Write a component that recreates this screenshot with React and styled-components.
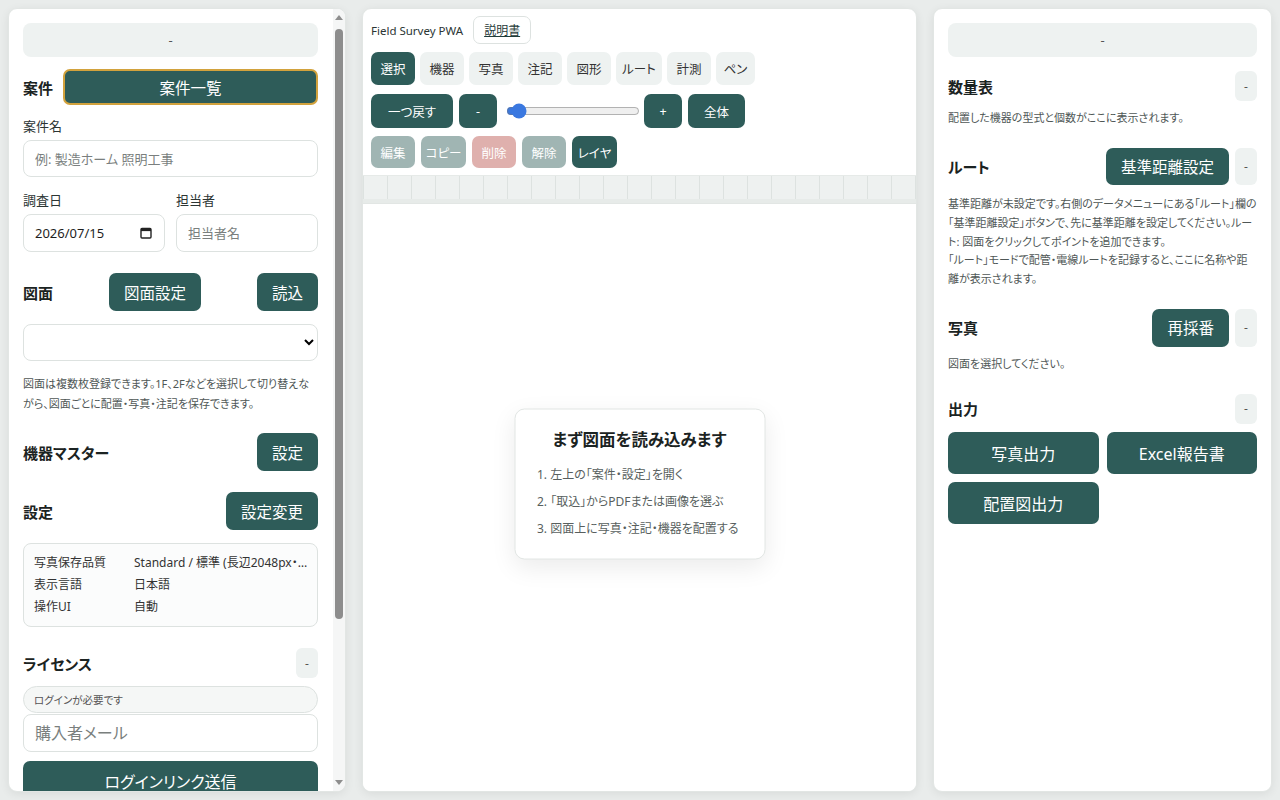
import styled, { createGlobalStyle } from 'styled-components';

const teal = '#2e5c59';
const soft = '#eef2f1';
const line = '#dde2e0';

const GlobalStyle = createGlobalStyle`
	* { box-sizing: border-box; }
	html, body { margin: 0; height: 100%; }
	body {
		background: #e9eceb;
		color: #1e2a29;
		font-family: 'Noto Sans', 'Noto Sans CJK JP', sans-serif;
		font-feature-settings: 'palt';
	}
	#root { height: 100%; }
	button, input, select { font-feature-settings: 'palt'; }
`;

const Layout = styled.div`
	display: grid;
	grid-template-columns: 338px 1fr 339px;
	column-gap: 16px;
	padding: 8px;
	height: 100vh;
`;

const Panel = styled.aside`
	background: #fff;
	border: 1px solid #e2e6e4;
	border-radius: 9px;
	box-shadow: 0 2px 10px rgba(0, 0, 0, 0.07);
	padding: 14px;
	overflow: hidden;
	min-height: 0;
`;

const ScrollPanel = styled.aside`
	display: flex;
	background: #fff;
	border: 1px solid #e2e6e4;
	border-radius: 9px;
	box-shadow: 0 2px 10px rgba(0, 0, 0, 0.07);
	overflow: hidden;
	min-height: 0;
`;

const ScrollArea = styled.div`
	flex: 1;
	min-width: 0;
	padding: 14px 15px 14px 14px;
	overflow-y: auto;
	scrollbar-width: none;
	&::-webkit-scrollbar { display: none; }
`;

const Track = styled.div`
	flex: none;
	width: 12px;
	display: flex;
	flex-direction: column;
	align-items: center;
	background: #f5f6f6;
	padding: 4px 0 4px;
`;

const Arrow = styled.span`
	flex: none;
	width: 0;
	height: 0;
	border-left: 4px solid transparent;
	border-right: 4px solid transparent;
	${({ $down }) =>
		$down ? 'border-top: 5px solid #8e8e8e;' : 'border-bottom: 5px solid #8e8e8e;'}
	margin-top: ${({ $down }) => ($down ? 'auto' : '2px')};
	margin-bottom: ${({ $down }) => ($down ? '2px' : '0')};
`;

const Thumb = styled.span`
	flex: none;
	width: 8px;
	height: 590px;
	margin-top: 9px;
	border-radius: 4px;
	background: #8d8d8d;
`;

const CollapseBar = styled.button`
	display: block;
	width: 100%;
	height: 34px;
	border: none;
	border-radius: 8px;
	background: ${soft};
	color: #555;
	font: inherit;
	font-size: 13px;
`;

const Heading = styled.h2`
	margin: 0;
	font-size: 15px;
	font-weight: 700;
	color: #1b2322;
	white-space: nowrap;
	align-self: center;
`;

const Row = styled.div`
	display: flex;
	align-items: ${({ $stretch }) => ($stretch ? 'stretch' : 'center')};
	justify-content: ${({ $justify }) => $justify || 'flex-start'};
	gap: ${({ $gap }) => $gap || 0}px;
	margin-top: ${({ $mt }) => $mt || 0}px;
`;

const Spacer = styled.div`
	flex: 1;
`;

const Button = styled.button`
	flex: ${({ $grow }) => ($grow ? 1 : 'none')};
	height: ${({ $h }) => $h || 38}px;
	padding: 0 ${({ $px }) => ($px === undefined ? 15 : $px)}px;
	border: ${({ $gold }) => ($gold ? '2px solid #d2a23d' : 'none')};
	border-radius: 7px;
	background: ${teal};
	color: #fff;
	font: inherit;
	font-size: ${({ $fs }) => $fs || 15.5}px;
	white-space: nowrap;
	cursor: pointer;
`;

const MiniButton = styled.button`
	flex: none;
	width: 22px;
	min-height: 30px;
	border: none;
	border-radius: 6px;
	background: ${soft};
	color: #555;
	font: inherit;
	font-size: 12px;
	padding: 0;
`;

const Label = styled.label`
	display: block;
	font-size: 13px;
	line-height: 18px;
	color: #2c3534;
	margin-top: ${({ $mt }) => $mt || 0}px;
`;

const TextInput = styled.input`
	display: block;
	width: 100%;
	height: ${({ $h }) => $h || 37}px;
	margin-top: ${({ $mt }) => ($mt === undefined ? 5 : $mt)}px;
	border: 1px solid ${line};
	border-radius: 8px;
	padding: 0 11px;
	font: inherit;
	font-size: ${({ $fs }) => $fs || 13}px;
	color: #222;
	background: #fff;
	&::placeholder { color: #7a7f7e; }
`;

const DateField = styled.div`
	display: flex;
	align-items: center;
	justify-content: space-between;
	height: 38px;
	margin-top: 5px;
	border: 1px solid ${line};
	border-radius: 8px;
	padding: 0 12px 0 11px;
	font-size: 13px;
	color: #1e1e1e;
`;

const TwoCol = styled.div`
	display: grid;
	grid-template-columns: 142px 1fr;
	column-gap: 11px;
	margin-top: 14px;
`;

const Select = styled.select`
	display: block;
	width: 100%;
	height: 37px;
	margin-top: 13px;
	border: 1px solid ${line};
	border-radius: 8px;
	background: #fff;
	font: inherit;
	font-size: 13px;
	padding: 0 8px;
`;

const Help = styled.p`
	margin: ${({ $mt }) => $mt || 0}px 0 0;
	font-size: 11px;
	line-height: ${({ $lh }) => $lh || 20}px;
	color: #4f5756;
`;

const InfoBox = styled.div`
	margin-top: 13px;
	border: 1px solid ${line};
	border-radius: 8px;
	background: #fbfcfc;
	padding: 8px 7px 8px 10px;
	display: grid;
	grid-template-columns: 100px 1fr;
	font-size: 12px;
	line-height: 22px;
	color: #333;
	span { white-space: nowrap; overflow: hidden; text-overflow: ellipsis; }
`;

const Pill = styled.div`
	margin-top: 8px;
	height: 27px;
	border: 1px solid ${line};
	border-radius: 14px;
	background: #f5f7f6;
	padding: 0 10px;
	display: flex;
	align-items: center;
	font-size: 10.5px;
	color: #555;
`;

const Center = styled.main`
	background: #fff;
	border: 1px solid #e2e6e4;
	border-radius: 9px;
	box-shadow: 0 2px 10px rgba(0, 0, 0, 0.07);
	display: flex;
	flex-direction: column;
	overflow: hidden;
	min-width: 0;
`;

const Toolbar = styled.div`
	padding: 7px 8px 7px;
	display: flex;
	flex-direction: column;
	gap: 8px;
	border-bottom: 1px solid #e6eae8;
`;

const TopRow = styled.div`
	display: flex;
	align-items: center;
	gap: 10px;
	height: 28px;
	font-size: 11.5px;
	color: #2b3534;
`;

const Manual = styled.button`
	height: 28px;
	padding: 0 10px;
	border: 1px solid ${line};
	border-radius: 7px;
	background: #fff;
	font: inherit;
	font-size: 12px;
	color: #1f3b39;
	text-decoration: underline;
`;

const ToolRow = styled.div`
	display: flex;
	align-items: center;
	gap: ${({ $gap }) => $gap || 6}px;
	margin-top: ${({ $mt }) => $mt || 0}px;
`;

const Tool = styled.button`
	flex: none;
	height: ${({ $h }) => $h || 33}px;
	min-width: ${({ $w }) => $w || 38}px;
	width: ${({ $w }) => ($w ? `${$w}px` : 'auto')};
	padding: 0 ${({ $px }) => ($px === undefined ? 9 : $px)}px;
	border: none;
	border-radius: 7px;
	font: inherit;
	font-size: 12.5px;
	white-space: nowrap;
	color: ${({ $variant }) => ($variant === 'plain' ? '#333' : '#fff')};
	background: ${({ $variant }) =>
		$variant === 'plain' ? soft : $variant === 'danger' ? '#b9524b' : teal};
	opacity: ${({ $disabled }) => ($disabled ? 0.45 : 1)};
`;

const Zoom = styled.input`
	width: 134px;
	margin: 0 -2px 0 3px;
	accent-color: #3a78e0;
`;

const Canvas = styled.div`
	position: relative;
	flex: 1;
	background: #fff;
`;

const Ruler = styled.div`
	height: 28px;
	background-color: #eef1f0;
	background-image: linear-gradient(to right, #dde2e0 1px, transparent 1px);
	background-size: 24px 100%;
	border-bottom: 1px solid #e2e6e4;
	box-shadow: inset 0 -4px 0 #e7ebe9;
`;

const EmptyCard = styled.div`
	position: absolute;
	left: 50%;
	top: 50%;
	transform: translate(-50%, -50%);
	width: 251px;
	padding: 18px 22px 17px;
	background: #fff;
	border: 1px solid #e2e6e4;
	border-radius: 10px;
	box-shadow: 0 8px 24px rgba(0, 0, 0, 0.08);
	h3 {
		margin: 0 0 9px;
		text-align: center;
		font-size: 16.5px;
		line-height: 24px;
		font-weight: 700;
		color: #1b2322;
	}
	ol {
		margin: 0;
		padding: 0;
		list-style: none;
		font-size: 12px;
		line-height: 27px;
		color: #585f5e;
		white-space: nowrap;
	}
`;

const OutputGrid = styled.div`
	display: grid;
	grid-template-columns: 1fr 1fr;
	gap: 8px;
	margin-top: 8px;
`;

const CalendarIcon = () => (
	<svg width="12" height="12" viewBox="0 0 12 12" aria-hidden="true">
		<rect x="1" y="1.5" width="10" height="9.5" rx="1" fill="none" stroke="#222" strokeWidth="1.4" />
		<rect x="1" y="1.5" width="10" height="2.6" fill="#222" />
	</svg>
);

export default function App() {
	const tools = [
		{ label: '選択', w: 44 },
		{ label: '機器', w: 44 },
		{ label: '写真', w: 44 },
		{ label: '注記', w: 44 },
		{ label: '図形', w: 44 },
		{ label: 'ルート', w: 46 },
		{ label: '計測', w: 44 },
		{ label: 'ペン', w: 39 },
	];

	return (
		<>
			<GlobalStyle />
			<Layout>
				<ScrollPanel>
					<ScrollArea>
						<CollapseBar>-</CollapseBar>
						<Row $mt={12} $gap={10}>
							<Heading>案件</Heading>
							<Button $grow $gold $h={36}>案件一覧</Button>
						</Row>
						<Label $mt={12}>案件名</Label>
						<TextInput placeholder='例: 製造ホーム 照明工事' />
						<TwoCol>
							<div>
								<Label>調査日</Label>
								<DateField>
									<span>2026/07/15</span>
									<CalendarIcon />
								</DateField>
							</div>
							<div>
								<Label>担当者</Label>
								<TextInput $h={38} placeholder='担当者名' />
							</div>
						</TwoCol>
						<Row $mt={21} $justify='space-between'>
							<Heading>図面</Heading>
							<Button>図面設定</Button>
							<Button>読込</Button>
						</Row>
						<Select>
							<option></option>
						</Select>
						<Help $mt={13}>
							図面は複数枚登録できます。1F、2Fなどを選択して切り替えながら、図面ごとに配置・写真・注記を保存できます。
						</Help>
						<Row $mt={19} $justify='space-between'>
							<Heading>機器マスター</Heading>
							<Button>設定</Button>
						</Row>
						<Row $mt={21} $justify='space-between'>
							<Heading>設定</Heading>
							<Button>設定変更</Button>
						</Row>
						<InfoBox>
							<span>写真保存品質</span>
							<span>Standard / 標準 (長辺2048px・JPEG 85%)</span>
							<span>表示言語</span>
							<span>日本語</span>
							<span>操作UI</span>
							<span>自動</span>
						</InfoBox>
						<Row $mt={21} $justify='space-between'>
							<Heading>ライセンス</Heading>
							<MiniButton>-</MiniButton>
						</Row>
						<Pill>ログインが必要です</Pill>
						<TextInput $mt={1} $h={38} $fs={16} placeholder='購入者メール' />
						<Row $mt={9}>
							<Button $grow $h={40} $fs={16}>ログインリンク送信</Button>
						</Row>
						<Help $mt={12}>
							購入時のメールアドレスを入力すると、ログイン用のリンクが送信されます。
						</Help>
						<Row $mt={21} $justify='space-between'>
							<Heading>データ</Heading>
							<MiniButton>-</MiniButton>
						</Row>
						<Help $mt={8}>バックアップと復元はこの端末内で行われます。</Help>
						<Row $mt={12} $gap={8}>
							<Button $grow>バックアップ</Button>
							<Button $grow>復元</Button>
						</Row>
						<Help $mt={16}>Field Survey PWA</Help>
					</ScrollArea>
					<Track>
						<Arrow />
						<Thumb />
						<Arrow $down />
					</Track>
				</ScrollPanel>

				<Center>
					<Toolbar>
						<TopRow>
							<span>Field Survey PWA</span>
							<Manual>説明書</Manual>
						</TopRow>
						<ToolRow $gap={5}>
							{tools.map((t, i) => (
								<Tool key={t.label} $w={t.w} $px={0} $variant={i === 0 ? 'teal' : 'plain'}>
									{t.label}
								</Tool>
							))}
						</ToolRow>
						<ToolRow $mt={1}>
							<Tool $h={34} $px={17}>一つ戻す</Tool>
							<Tool $h={34}>-</Tool>
							<Zoom type='range' min='0' max='100' defaultValue='4' />
							<Tool $h={34}>+</Tool>
							<Tool $h={34} $px={16}>全体</Tool>
						</ToolRow>
						<ToolRow>
							<Tool $h={32} $w={44} $px={0} $disabled>編集</Tool>
							<Tool $h={32} $w={45} $px={0} $disabled>コピー</Tool>
							<Tool $h={32} $w={44} $px={0} $disabled $variant='danger'>削除</Tool>
							<Tool $h={32} $w={44} $px={0} $disabled>解除</Tool>
							<Tool $h={32} $w={45} $px={0}>レイヤ</Tool>
						</ToolRow>
					</Toolbar>
					<Canvas>
						<Ruler />
						<EmptyCard>
							<h3>まず図面を読み込みます</h3>
							<ol>
								<li>1. 左上の「案件・設定」を開く</li>
								<li>2. 「取込」からPDFまたは画像を選ぶ</li>
								<li>3. 図面上に写真・注記・機器を配置する</li>
							</ol>
						</EmptyCard>
					</Canvas>
				</Center>

				<Panel>
					<CollapseBar>-</CollapseBar>
					<Row $mt={14} $stretch>
						<Heading>数量表</Heading>
						<Spacer />
						<MiniButton>-</MiniButton>
					</Row>
					<Help $mt={7} $lh={19}>配置した機器の型式と個数がここに表示されます。</Help>
					<Row $mt={21} $stretch $gap={6}>
						<Heading>ルート</Heading>
						<Spacer />
						<Button $h={37}>基準距離設定</Button>
						<MiniButton>-</MiniButton>
					</Row>
					<Help $mt={10} $lh={18.8}>
						基準距離が未設定です。右側のデータメニューにある「ルート」欄の「基準距離設定」ボタンで、先に基準距離を設定してください。ルート: 図面をクリックしてポイントを追加できます。
						<br />
						「ルート」モードで配管・電線ルートを記録すると、ここに名称や距離が表示されます。
					</Help>
					<Row $mt={20} $stretch $gap={6}>
						<Heading>写真</Heading>
						<Spacer />
						<Button $h={38}>再採番</Button>
						<MiniButton>-</MiniButton>
					</Row>
					<Help $mt={7} $lh={19}>図面を選択してください。</Help>
					<Row $mt={21} $stretch>
						<Heading>出力</Heading>
						<Spacer />
						<MiniButton>-</MiniButton>
					</Row>
					<OutputGrid>
						<Button $h={42} $fs={16}>写真出力</Button>
						<Button $h={42} $fs={16}>Excel報告書</Button>
						<Button $h={42} $fs={16}>配置図出力</Button>
					</OutputGrid>
				</Panel>
			</Layout>
		</>
	);
}
